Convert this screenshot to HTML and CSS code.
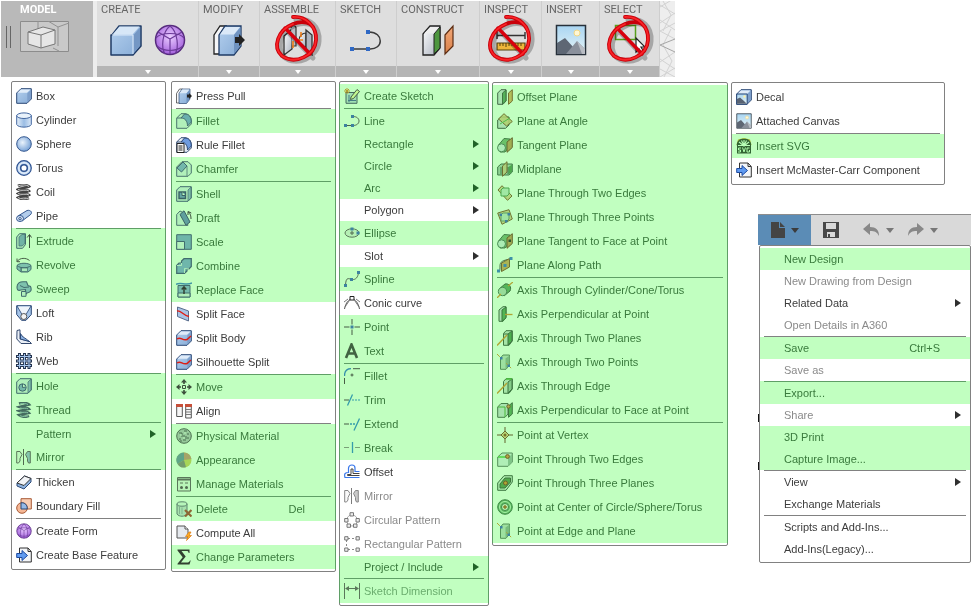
FILE: index.html
```html
<!DOCTYPE html>
<html lang="en">
<head>
<meta charset="utf-8">
<title>Modeling commands</title>
<link rel="stylesheet" href="styles.css">
</head>
<body>
<svg class="defs" aria-hidden="true">
<defs>
<linearGradient id="gb" x1="0" y1="0" x2="1" y2="1"><stop offset="0" stop-color="#b4d0ee"/><stop offset="1" stop-color="#86abd6"/></linearGradient>
<linearGradient id="gc" x1="0" y1="0" x2="1" y2="0"><stop offset="0" stop-color="#e6f0fa"/><stop offset=".5" stop-color="#9bbde4"/><stop offset="1" stop-color="#dbe8f7"/></linearGradient>
<radialGradient id="gs" cx=".4" cy=".4" r=".6"><stop offset="0" stop-color="#eaf3fc"/><stop offset="1" stop-color="#7ba5d8"/></radialGradient>
<radialGradient id="gp" cx=".5" cy=".4" r=".6"><stop offset="0" stop-color="#e9ccff"/><stop offset="1" stop-color="#a35fdc"/></radialGradient>
<linearGradient id="gw" x1="0" y1="0" x2="1" y2="1"><stop offset="0" stop-color="#fff"/><stop offset="1" stop-color="#a9b0bd"/></linearGradient>
<linearGradient id="sky" x1="0" y1="0" x2="0" y2="1"><stop offset="0" stop-color="#a9d5f2"/><stop offset="1" stop-color="#e6f4f6"/></linearGradient>
<linearGradient id="or" x1="0" y1="0" x2="0" y2="1"><stop offset="0" stop-color="#f3a878"/><stop offset="1" stop-color="#d9814a"/></linearGradient>
</defs>
<!-- large ribbon icons -->
<symbol id="L-box" viewBox="0 0 32 32"><path d="M2 11 9 2H31V22L23 31H1V11Z" fill="url(#gb)" stroke="#1f3b66" stroke-width="1.5" stroke-linejoin="round"/><path d="M2.500 10.500 9.500 2.500H29.500L22.500 10.500Z" fill="#d7e7f7"/><path d="M23.500 11 30 3.500V21.500L23.500 29.500Z" fill="#7497c4"/><path d="M2 11H23V30" fill="none" stroke="#dceafa"/></symbol>
<symbol id="L-form" viewBox="0 0 32 32"><circle cx="16" cy="16" r="14.500" fill="url(#gp)" stroke="#562b7d" stroke-width="1.500"/><path d="M16 2C8 8 7 24 11 30M16 2C24 8 25 24 21 30M2 14C6 8 26 8 30 14M3 22C10 28 22 28 29 22M16 15 16 30M16 15 4 8M16 15 28 8" fill="none" stroke="#6b3a98" stroke-width="1.200"/></symbol>
<symbol id="L-press" viewBox="0 0 32 32"><path d="M1 11 7 2H13L8 11V30H1Z" fill="#f5f6f8" stroke="#222" stroke-width="1.300"/><path d="M6 11 12 2H28V22L21 31H6Z" fill="url(#gb)" stroke="#1f3b66" stroke-width="1.300"/><path d="M7 10.500 12.500 3H27L21 10.500Z" fill="#dbe9f8"/><path d="M21 11 27.500 3V22L21 30Z" fill="#6f93c1"/><path d="M22 13H26V10L32 16 26 22V19H22Z" fill="#222"/></symbol>
<symbol id="L-joint" viewBox="0 0 32 32"><path d="M2 12 10 5V25L2 31Z" fill="url(#gw)" stroke="#333" stroke-width="1.300"/><path d="M9 4C9 1 14 1 14 4V22H10" fill="#b9bcc2" stroke="#333" stroke-width="1.200"/><path d="M17 17C17 11 21 9 24 9V23C20 23 17 22 17 17Z" fill="url(#gw)" stroke="#333" stroke-width="1.200"/><path d="M24 6 30 11V31L24 25Z" fill="#aeb4bf" stroke="#333" stroke-width="1.300"/><path d="M11 17V24M16 16H21M19 8V13" stroke="#ee7e1a" stroke-width="1.600"/></symbol>
<symbol id="L-sketch" viewBox="0 0 32 32"><path d="M2 25H19C34 26 34 8 19 8" fill="none" stroke="#3b3b3b" stroke-width="1.500"/><path d="M0 23h4v4H0ZM16 23h4v4h-4ZM16 6h4v4h-4Z" fill="#2f68c4"/></symbol>
<symbol id="L-construct" viewBox="0 0 32 32"><path d="M1 10 8 2H18V24L12 31H1Z" fill="url(#gw)" stroke="#222" stroke-width="1.300"/><path d="M12 10 18 3V24L12 30Z" fill="#4d963f" stroke="#222"/><path d="M2 9.500 8.500 3H17L11.500 9.500Z" fill="#eee"/><path d="M23 11 31 2V22L23 30Z" fill="url(#or)" stroke="#5b2c12" stroke-width="1.200"/></symbol>
<symbol id="L-measure" viewBox="0 0 32 32"><path d="M2 11.500H30M2 8V15M30 8V15" stroke="#333" stroke-width="1.400"/><path d="M2 19H30V26H2Z" fill="#eeb63b" stroke="#53400c" stroke-width="1.200"/><path d="M5 19V22M8 19V22M11 19V23M14 19V22M17 19V22M20 19V23M23 19V22M26 19V22" stroke="#53400c"/></symbol>
<symbol id="L-picture" viewBox="0 0 32 32"><path d="M1.500 1.500H30.500V30.500H1.500Z" fill="url(#sky)" stroke="#27303a" stroke-width="1.500"/><circle cx="22" cy="9" r="3" fill="#fff7d4" stroke="#f2d785"/><path d="M2 19 10 14 19 24 25 30H2Z" fill="#5e6774"/><path d="M11 30 22 17 30 25V30Z" fill="#8a909b"/><path d="M22 17 30 25V30H27Z" fill="#b8bcc3"/></symbol>
<symbol id="L-select" viewBox="0 0 32 32"><path d="M1.500 1.500H21.500V15.500H1.500Z" fill="none" stroke="#58a01c" stroke-width="1.500"/><path d="M22 14V28L25 25 28 30 30 28 27 23H31Z" fill="#fff" stroke="#222" stroke-width="1.200"/></symbol>
<symbol id="no" viewBox="0 0 56 56"><g fill="none" stroke-linecap="round" stroke-linejoin="round"><path d="M24 7C38 4 48 14 47 28C46 45 24 54 12 44C4 34 9 18 24 12C34 8 44 12 46 20M15 18 41 45" stroke="#000" stroke-opacity=".25" stroke-width="5"/><path d="M21 4C33 3 45 13 44 27C43 43 23 52 10 43C0 34 6 17 21 11C31 7 40 10 42 16" stroke="#c9000a" stroke-width="3.800"/><path d="M13 15 38 41" stroke="#d9000d" stroke-width="3.400"/><path d="M21 4C33 3 45 13 44 27C43 43 23 52 10 43C0 34 6 17 21 11" stroke="#fa2428" stroke-width="1.800"/></g></symbol>

<!-- create menu -->
<symbol id="box" viewBox="0 0 16 16"><path d="M.700 5 5 .700H15.300V11L11 15.300H.700Z" fill="url(#gb)" stroke="#2b4876"/><path d="M1.500 4.700 5 1.500H14.500L11 4.700Z" fill="#e0ecf9"/><path d="M11.300 5.300 14.800 2V10.700L11.300 14.500Z" fill="#7d9fcb"/></symbol>
<symbol id="cyl" viewBox="0 0 16 16"><path d="M.700 3.500V12.500C2 16 14 16 15.300 12.500V3.500Z" fill="url(#gc)" stroke="#4367a0"/><ellipse cx="8" cy="3.700" rx="7.300" ry="2.800" fill="#e9f2fb" stroke="#4367a0"/></symbol>
<symbol id="sph" viewBox="0 0 16 16"><circle cx="8" cy="8" r="7.300" fill="url(#gs)" stroke="#34578f"/></symbol>
<symbol id="tor" viewBox="0 0 16 16"><circle cx="8" cy="8" r="7.300" fill="#b7d0ee" stroke="#2f5391" stroke-width="1.200"/><circle cx="8" cy="8" r="5.300" fill="none" stroke="#e5effa" stroke-width="1.200"/><circle cx="8" cy="8" r="3.300" fill="#fff" stroke="#2f5391" stroke-width="1.500"/></symbol>
<symbol id="coil" viewBox="0 0 16 16"><g fill="none" stroke="#444" stroke-width="2.600"><path d="M2 2C5 .500 11 .500 13 2.500C10 4 5 4 2 5.500C5 7.500 11 5 13 7C10 9 5 7.500 2 9.500C5 11.500 11 9 13 11C10 13 5 11.500 2 13.500C5 15.500 10 15 13 14"/></g><g fill="none" stroke="#ddd" stroke-width=".900"><path d="M2 2C5 .500 11 .500 13 2.500M2 5.500C5 7.500 11 5 13 7M2 9.500C5 11.500 11 9 13 11M2 13.500C5 15.500 10 15 13 14"/></g></symbol>
<symbol id="pipe" viewBox="0 0 16 16"><path d="M2 8 11 2.500C15 1.500 17 5 14 7L6 13Z" fill="#b3cdec" stroke="#34578f"/><ellipse cx="4" cy="10.500" rx="3.500" ry="3" fill="#d5e4f6" stroke="#34578f"/><ellipse cx="4" cy="10.700" rx="1.300" ry="1.100" fill="#fff" stroke="#34578f"/></symbol>
<symbol id="extrude" viewBox="0 0 16 16"><path d="M.700 4 3.500 .700H9.500V11.500L6.500 15.300H.700Z" fill="#dbe7f5" stroke="#2b4876"/><path d="M3 4 6 1.500H9V10.500L6 13H3Z" fill="#79a0d2" stroke="#2b4876" stroke-width=".700"/><path d="M13.500 15V2M11.200 4.500 13.500 1.500 15.500 4.500" fill="none" stroke="#222"/></symbol>
<symbol id="revolve" viewBox="0 0 16 16"><path d="M1 4.500C4 .500 10 .500 13.500 3.500M1 1.500V4.700H4" fill="none" stroke="#333"/><path d="M1 8.500C3 5.500 13 5.500 15 8.500V12.500L12 15H5L1 12Z" fill="#8fb3e0" stroke="#2b4876"/><path d="M1 8.500C4 11.500 12 11.500 15 8.500M5 10.500V15" fill="none" stroke="#2b4876"/><path d="M5.500 11H11.500V14.500H5.500Z" fill="#dbe8f6" stroke="#2b4876" stroke-width=".700"/></symbol>
<symbol id="sweep" viewBox="0 0 16 16"><path d="M1 6C1 2 4 .700 7 .700H10.500L12 4.500 14.500 5.500C16 9 15 11 11 12L9.500 13.500V8.500L5 9C2 10 1 9 1 6Z" fill="#8fb3e0" stroke="#2b4876" stroke-width="1.100"/><path d="M4 4.500 8 6.500 13 6" fill="none" stroke="#2b4876"/><path d="M5.500 10.500H10V15.300H5.500Z" fill="#e5eefa" stroke="#2b4876"/></symbol>
<symbol id="loft" viewBox="0 0 16 16"><path d="M.700 .700H15.300V9.500L10 15.300H5.500L.700 9.500Z" fill="#a6c5e9" stroke="#2b4876"/><path d="M1.500 1.500H14.500L10 9H6Z" fill="#eef4fb"/><path d="M1 1 6 9.500M15 1 10 9.500" stroke="#2b4876" stroke-width=".800"/><circle cx="7.800" cy="11.500" r="3" fill="#f3f3f3" stroke="#555"/></symbol>
<symbol id="rib" viewBox="0 0 16 16"><path d="M1 1.500 4 .800V10L13 12 15.500 14.500 5 14.500 .800 10Z" fill="#e9eef5" stroke="#34496e"/><path d="M4.500 4.500C6 8.500 10 9 13 12.500L4.500 10Z" fill="#8db2e2" stroke="#2b4876"/></symbol>
<symbol id="web" viewBox="0 0 16 16"><path d="M3.500 0V16M8.500 0V16M13 0V16M0 3.500H16M0 8H16M0 12.500H16" stroke="#24344f" stroke-width="3"/><path d="M3.500 1V15M8.500 1V15M13 1V15M1 3.500H15M1 8H15M1 12.500H15" stroke="#a5c4ec" stroke-width="1.100"/></symbol>
<symbol id="hole" viewBox="0 0 16 16"><path d="M.700 4 4 .700H15.300V12L12 15.300H.700Z" fill="#e3ebf5" stroke="#2b4876"/><path d="M12 4 15 1.200V12L12 15Z" fill="#8fb0da" stroke="#2b4876" stroke-width=".700"/><circle cx="6.500" cy="9.500" r="3.700" fill="#7fa5d8" stroke="#2b4876"/><path d="M6.500 6V9.500L10 9" stroke="#2b4876" fill="#fff"/></symbol>
<symbol id="thread" viewBox="0 0 16 16"><path d="M3 1.500C6 .500 11 .500 13 2.500L3 5C6 6.500 11 4.500 13 7L3 9C6 10.500 11 8.500 13 11L3 13C6 15.500 11 15 13 14" fill="none" stroke="#30475f" stroke-width="2.500"/><path d="M4 2C7 1 10 1.500 12 2.500M4 6C7 7 10 5.500 12 6.800M4 10C7 11 10 9.500 12 10.800M4 13.700C7 15 10 14.500 12 13.800" fill="none" stroke="#a9c2dc" stroke-width=".900"/></symbol>
<symbol id="mirror" viewBox="0 0 16 16"><path d="M7.500 0V16" stroke="#444"/><path d="M.700 2.500H4L6 5.500 4 9.500V12L2.500 14H.700Z" fill="#f7f7f7" stroke="#555"/><path d="M14.300 2.500H11.500L9.500 5.500 11.500 9.500V12L12.500 14H14.300Z" fill="#9ab7df" stroke="#555"/></symbol>
<symbol id="thicken" viewBox="0 0 16 16"><path d="M1 9 8.500 2 15 4.500V8L8 15 1 12Z" fill="#8db2df" stroke="#2b4876"/><path d="M1 9 8.500 2 15 4.500 8 11.500Z" fill="#f2f4f7" stroke="#333"/></symbol>
<symbol id="boundary" viewBox="0 0 16 16"><path d="M5 .700H15.300V11H5Z" fill="#f9cdb3" stroke="#a85a35"/><circle cx="6" cy="10" r="5.300" fill="#f5b795" stroke="#a85a35"/><path d="M5 4.800C9 4.500 11.500 7 11.200 11H5Z" fill="#95b9e6" stroke="#2b4876"/></symbol>
<symbol id="insertfile" viewBox="0 0 16 16"><path d="M3.500 1H12L15.300 4.500V15H3.500Z" fill="#f3f5f8" stroke="#333"/><path d="M12 1V4.500H15" fill="none" stroke="#333"/><path d="M.700 6.500H6V3.500L11.500 8.500 6 13.500V10.500H.700Z" fill="#5f9af0" stroke="#1d4aa0"/></symbol>
<!-- modify menu -->
<symbol id="fillet" viewBox="0 0 16 16"><path d="M.700 5 5 .700H9C13 1 15.300 4 15.300 8V11L11 15.300H.700Z" fill="#e5ecf5" stroke="#3b5377"/><path d="M5 5 8.500 1C13 1 15.300 4 15.300 9L11.500 13C11.500 8 9 5 5 5Z" fill="#6e9be0" stroke="#2b4876"/><path d="M1 5H5" stroke="#3b5377"/></symbol>
<symbol id="rulefillet" viewBox="0 0 16 16"><use href="#fillet"/><path d="M1 6.500H8V15.500H1Z" fill="#fff" stroke="#222"/><path d="M2.500 9H6.500M2.500 11H6.500M2.500 13H6.500" stroke="#222"/></symbol>
<symbol id="chamfer" viewBox="0 0 16 16"><path d="M.700 6 6 .700H12L15.300 4V12L12 15.300H.700Z" fill="#e5ecf5" stroke="#3b5377"/><path d="M1 7 7 1 11 5 5.500 11Z" fill="#7ba5dd" stroke="#2b4876"/><path d="M11 5V15" stroke="#3b5377" stroke-width=".800"/></symbol>
<symbol id="shell" viewBox="0 0 16 16"><path d="M.700 4 4 .700H15.300V12L12 15.300H.700Z" fill="#e3ebf5" stroke="#2b4876"/><path d="M12 4 15 1.200V12L12 15Z" fill="#8fb0da" stroke="#2b4876" stroke-width=".700"/><path d="M3 6H9.500V12.500H3Z" fill="#6690d0" stroke="#1f3b66" stroke-width="1.400"/><path d="M6 6V9.500H9.500" fill="#fff" stroke="#1f3b66"/></symbol>
<symbol id="draft" viewBox="0 0 16 16"><path d="M.700 4.500 4 1 8 3 12 15.300H.700Z" fill="#e3ebf5" stroke="#3b5377"/><path d="M4 4.500 8 .800 14 12 10 15.300Z" fill="#5c87c6" stroke="#1f3b66"/><path d="M15 9C15 6 14.500 4 12.500 2M12 5 12 1.500 15.300 3" fill="none" stroke="#222"/></symbol>
<symbol id="scale" viewBox="0 0 16 16"><path d="M.700 .700H15.300V15.300H.700Z" fill="#75a3da" stroke="#2b4876"/><path d="M.700 7.500H8.500V15.300H.700Z" fill="#e9eff8" stroke="#2b4876"/></symbol>
<symbol id="combine" viewBox="0 0 16 16"><path d="M.700 7.500 3 5H5.500V3L8 .700H15.300V8.500L13 11H11V13L8.500 15.300H.700Z" fill="#77a4dc" stroke="#2b4876" stroke-width="1.200"/><path d="M5.500 7.500V5M1 7.500H5.500M8.500 15V10.500L13 11" fill="none" stroke="#dfe9f5"/></symbol>
<symbol id="replace" viewBox="0 0 16 16"><path d="M0 2.500C4 -.500 10 4 16 1" fill="none" stroke="#2879d2" stroke-width="1.500"/><path d="M2 3.500H14V15H2Z" fill="#82a9dc" stroke="#2b4876"/><path d="M2 11H14V15H2Z" fill="#e2eaf4" stroke="#2b4876"/><path d="M8 12V5M5.700 7.500 8 4.800 10.300 7.500" fill="none" stroke="#111" stroke-width="1.500"/></symbol>
<symbol id="splitface" viewBox="0 0 16 16"><path d="M1.500 1 12.500 5V15L1.500 10.500Z" fill="#a9c3e5" stroke="#596d8d"/><path d="M1 5C5 4 6 9 13 10.500" fill="none" stroke="#e01b12" stroke-width="1.300"/></symbol>
<symbol id="splitbody" viewBox="0 0 16 16"><use href="#box"/><path d="M1 9C5 6 6 11 11 9.500L15 6" fill="none" stroke="#dd1e14" stroke-width="1.500"/></symbol>
<symbol id="move" viewBox="0 0 16 16"><path d="M8 0 11 3.500H8.800V5H7.200V3.500H5ZM8 16 5 12.500H7.200V11H8.800V12.500H11ZM0 8 3.500 5V7.200H5V8.800H3.500V11ZM16 8 12.500 11V8.800H11V7.200H12.500V5Z" fill="#222"/><path d="M6.500 6.500H9.500V9.500H6.500Z" fill="#fff" stroke="#222"/></symbol>
<symbol id="align" viewBox="0 0 16 16"><path d="M.700 1.500H6.300V13.500H.700ZM9.700 1.500H15.300V15H9.700Z" fill="#f5f5f5" stroke="#555"/><path d="M0 1H7V4H0ZM9 1H16V4H9Z" fill="#c64f39"/><path d="M10 6.500H15M10 9H15M10 11.500H15" stroke="#777"/></symbol>
<symbol id="physical" viewBox="0 0 16 16"><circle cx="8" cy="8" r="7.300" fill="#b6bcc0" stroke="#3b4b42"/><path d="M3 5H6M8 3H11M5 8H9M11 6H13M3 11H5M7 12H10M11 10H13M6 5V7M10 8V11M5 12V14" stroke="#3b4b42"/><path d="M4 7H6M8 5H10M7 10H9" stroke="#f3f6f4"/></symbol>
<symbol id="appearance" viewBox="0 0 16 16"><circle cx="8" cy="8" r="7.500" fill="#d5cb51"/><path d="M8 8V.500A7.500 7.500 0 0 0 1.500 12Z" fill="#5b8fa0"/><path d="M8 8 1.500 12A7.500 7.500 0 0 0 10 15.200Z" fill="#7c8377"/><path d="M8 .500A7.500 7.500 0 0 1 15.500 7L8 8Z" fill="#d38f6b"/></symbol>
<symbol id="manage" viewBox="0 0 16 16"><path d="M1.500 1.500H14.500V15H1.500Z" fill="#f2f2f2" stroke="#555"/><path d="M1.500 3.500H14.500" stroke="#555" stroke-width="2"/><path d="M4 7H7M9 7H12" stroke="#555"/><circle cx="5.500" cy="11.500" r="1.500" fill="#444"/><circle cx="10.500" cy="11.500" r="1.500" fill="#444"/></symbol>
<symbol id="delete" viewBox="0 0 16 16"><path d="M1 3V13C3 16 9 16 11 13V3Z" fill="#d2dae0" stroke="#546572"/><ellipse cx="6" cy="3" rx="5" ry="2.200" fill="#eef3f5" stroke="#546572"/><path d="M3.500 6V13M6 6.500V13" stroke="#94a2ad"/><path d="M9 9 15.500 15.500M15.500 9 9 15.500" stroke="#a94216" stroke-width="2.200"/></symbol>
<symbol id="compute" viewBox="0 0 16 16"><path d="M1 1H9L12 4V13H1Z" fill="#e5e9ee" stroke="#555"/><path d="M9 1V4H12" fill="#fff" stroke="#555"/><path d="M13 7 9.500 11.500H12L10.500 15.500 15.500 10.500H13L15 7Z" fill="#ffae20" stroke="#d97913" stroke-width=".700"/></symbol>
<symbol id="sigma" viewBox="0 0 16 16"><path d="M1.500 .500H13.500V4H12.700C12.400 2.500 12 2 10.500 2H5.500L9.700 7.500 5 13.500H11C12.700 13.500 13.300 13 14 11.500H14.700L13.500 15.500H1.500V14.700L6.700 8.300 1.500 1.500Z" fill="#111"/></symbol>
<!-- sketch menu -->
<symbol id="newsketch" viewBox="0 0 16 16"><path d="M2 4.500H13V15.300H2Z" fill="#c9d8ea" stroke="#31445d"/><path d="M5 14V7M4 12.500H12" stroke="#325b9b"/><path d="M7 9 13 1.500 15.500 3.500 9.500 10.500 6.500 11.500Z" fill="#fff6b0" stroke="#333"/><path d="M3 0V6M0 3H6M1 1 5 5M5 1 1 5" stroke="#e78710"/></symbol>
<symbol id="line" viewBox="0 0 16 16"><path d="M1 12.500H9C17 12.500 17 3.500 9 3.500" fill="none" stroke="#3c3c3c"/><path d="M0 11h3v3H0ZM7 11h3v3H7ZM7 2h3v3H7Z" fill="#2463c8"/></symbol>
<symbol id="ellipse" viewBox="0 0 16 16"><ellipse cx="8" cy="8" rx="7" ry="4.200" fill="#ececec" stroke="#555"/><path d="M6 8H10M8 6V10" stroke="#444"/><path d="M6.500 2.500h3v3h-3ZM12.500 6.500h3v3h-3Z" fill="#2463c8"/></symbol>
<symbol id="spline" viewBox="0 0 16 16"><path d="M1.500 14C2 5 5 8 8 8.500C12 9 14 6 14.500 1.500" fill="none" stroke="#444"/><path d="M0 13h3v3H0ZM6 7h3v3H6ZM13 0h3v3h-3Z" fill="#2463c8"/></symbol>
<symbol id="conic" viewBox="0 0 16 16"><path d="M.500 14C3 1 13 1 15.500 14" fill="none" stroke="#555"/><path d="M1 12 7 3M15 12 9 3M0 7 4 4M16 7 12 4" stroke="#777"/><path d="M6 1.500H10V5H6Z" fill="#fff" stroke="#222"/></symbol>
<symbol id="point" viewBox="0 0 16 16"><path d="M8 0V5.500M8 10.500V16M0 8H5.500M10.500 8H16" stroke="#333"/><path d="M6.500 6.500h3v3h-3Z" fill="#2463c8"/></symbol>
<symbol id="text" viewBox="0 0 16 16"><path d="M2 15 7.500 1.500 13 15M4 10.500H11" fill="none" stroke="#2b3b2c" stroke-width="2.600"/></symbol>
<symbol id="sfillet" viewBox="0 0 16 16"><path d="M.500 8C.500 3 3 .700 7 .700" fill="none" stroke="#1673dc" stroke-width="1.300"/><path d="M9 .700H16M.500 10V16M6.500 7H9.500M8 5.500V8.500" stroke="#333"/></symbol>
<symbol id="trim" viewBox="0 0 16 16"><path d="M0 8H5" stroke="#333"/><path d="M3.500 13.500 8.500 2.500" stroke="#1683dc" stroke-width="1.300"/><path d="M8 8h2M11 8h2M14 8h2" stroke="#1683dc"/></symbol>
<symbol id="extend" viewBox="0 0 16 16"><path d="M0 8H5" stroke="#333"/><path d="M10 14.500 15.500 2.500M6 8h2M9 8h2" stroke="#1683dc" stroke-width="1.300"/></symbol>
<symbol id="break" viewBox="0 0 16 16"><path d="M0 7.500H5M11 7.500H16" stroke="#888"/><path d="M8.500 2V13" stroke="#1683dc" stroke-width="1.300"/></symbol>
<symbol id="offset" viewBox="0 0 16 16"><path d="M15.500 13.500H1C0 10 1 8.500 4.500 8.500V4C5 0 11 0 11 4V7.500H15.500" fill="none" stroke="#3977ea" stroke-width="1.200"/><path d="M15.500 11.500H3.500V10.500H7V5H9V9.500H15.500" fill="none" stroke="#444"/></symbol>
<symbol id="circpat" viewBox="0 0 16 16"><circle cx="8" cy="8.500" r="5.500" fill="none" stroke="#aaa"/><g fill="#eee" stroke="#777"><path d="M6 .700H9.500V4H6ZM.700 6.500H4V10H.700ZM12 6.500H15.300V10H12ZM3 12H6.500V15.300H3ZM9.500 12H13V15.300H9.500Z"/></g></symbol>
<symbol id="rectpat" viewBox="0 0 16 16"><path d="M4 2.500H12M2.500 4V12M4 13.500H12" stroke="#888" stroke-dasharray="2 2"/><g fill="#eee" stroke="#777"><path d="M.700 .700H4V4H.700ZM12 .700H15.300V4H12ZM.700 12H4V15.300H.700ZM12 12H15.300V15.300H12Z"/></g></symbol>
<symbol id="dim" viewBox="0 0 16 16"><path d="M.500 0V16M15.500 0V16M2 5.500H14" stroke="#555"/><path d="M1 5.500 5 3V8ZM15 5.500 11 3V8Z" fill="#555"/></symbol>
<!-- construct menu -->
<symbol id="c-offset" viewBox="0 0 16 16"><path d="M.700 4 4 .700H9V12L6 15.300H.700Z" fill="#d5dce3" stroke="#33443b"/><path d="M5.500 4 9 1V12L5.500 15Z" fill="#4c9c54" stroke="#26552b"/><path d="M11.500 4 15.300 .700V12L11.500 15.300Z" fill="#e9ae55" stroke="#805010"/></symbol>
<symbol id="c-angle" viewBox="0 0 16 16"><path d="M.700 7 4 4H12V12L8.500 15.300H.700Z" fill="#d5dce3" stroke="#24482e"/><path d="M1.500 6 7 .700 15.300 8.500 9.500 13Z" fill="#e3c477" fill-opacity=".85" stroke="#765313"/><path d="M3 11 13 5" stroke="#44ad3e"/></symbol>
<symbol id="c-tangent" viewBox="0 0 16 16"><path d="M2 7.500 7 1.500 13 2V9L8 15 3 15Z" fill="#6eb26d" stroke="#2c5f34"/><circle cx="4.500" cy="10.800" r="4" fill="#dbe7ec" stroke="#39704a"/><path d="M10 5 15.300 .700V10.500L10 15.300Z" fill="#cb984a" stroke="#64420d"/></symbol>
<symbol id="c-mid" viewBox="0 0 16 16"><path d="M.700 6 4 3H15.300V11L12 14H.700Z" fill="#adc9b7" stroke="#265c35"/><path d="M11.500 6 15 3.500V11L11.500 13.500Z" fill="#3d9140"/><path d="M4 6V13M11 6V13" stroke="#265c35"/><path d="M5.500 5 10 .700V11L5.500 15.300Z" fill="#e5c382" fill-opacity=".8" stroke="#704b11"/></symbol>
<symbol id="c-edges" viewBox="0 0 16 16"><path d="M1 5 5 .700 15 11 10.500 15.300Z" fill="#e3cd91" stroke="#765313"/><path d="M4 5 6 3H12V9L10 11H4Z" fill="#c9e3d1" stroke="#3d9140"/></symbol>
<symbol id="c-three" viewBox="0 0 16 16"><path d="M.700 4 12 .700 15.300 10 5 15.300Z" fill="#e3cd91" stroke="#765313"/><path d="M4 6 6 4H12V10L10 12H4Z" fill="#c9dfd1" stroke="#5d8861"/><path d="M2.500 4.500h2.500v2.500H2.500ZM10.500 4h2.500v2.500h-2.500ZM8 11h2.500v2.500H8Z" fill="#2463c8"/></symbol>
<symbol id="c-tanface" viewBox="0 0 16 16"><use href="#c-tangent"/><path d="M11.500 6.500h2.500v2.500h-2.500Z" fill="#0b280c"/></symbol>
<symbol id="c-path" viewBox="0 0 16 16"><path d="M1 14C3 15 3 13 3 9 3 5 5 3 15 2" fill="none" stroke="#324b32"/><path d="M4.500 6 12.500 1.500V10L4.500 14.500Z" fill="#d7a14c" stroke="#704b11"/><path d="M0 12.500h3v3H0ZM6.500 7h3v3h-3ZM12.500 0h3v3h-3Z" fill="#2475d8"/></symbol>
<symbol id="a-cyl" viewBox="0 0 16 16"><path d="M2 7 8 2C12 1 15 5 13 9L7 14Z" fill="#4ca453" stroke="#26552b"/><circle cx="5.500" cy="9.500" r="4.200" fill="#b8d4bf" stroke="#39704a"/><path d="M0 16 4 12M11 4 16 0" stroke="#e48e14" stroke-width="1.300"/></symbol>
<symbol id="a-perp" viewBox="0 0 16 16"><path d="M2 4 6 .700H9V11L6 15.300H2Z" fill="#d5dce3" stroke="#26552b"/><path d="M5 4 9 1V12L5 15.300Z" fill="#47a24c" stroke="#1d5723"/><path d="M8 8.500H15.500" stroke="#e48e14" stroke-width="1.300"/></symbol>
<symbol id="a-planes" viewBox="0 0 16 16"><path d="M6.500 3.500 9 .700H15.300V11L12 15.300H6.500Z" fill="#d2dfd6" stroke="#24552b"/><path d="M11 4 15 1V11L11 15Z" fill="#3b9a40" stroke="#24552b"/><path d="M6.500 4H11" stroke="#24552b"/><path d="M0 15.500 10 5" stroke="#e48e14" stroke-width="1.400"/></symbol>
<symbol id="a-points" viewBox="0 0 16 16"><path d="M3.500 4 6 1H12.500V11L9 15.300H3.500Z" fill="#c3dacb" stroke="#4a7851"/><path d="M8.500 4.500 12.500 1.500V11L8.500 15Z" fill="#86ad91"/><path d="M0 0 16 16" stroke="#e48e14" stroke-dasharray="4 9 7"/><path d="M3 3h2.500v2.500H3ZM10.500 10.500H13V13h-2.500Z" fill="#2463c8"/></symbol>
<symbol id="a-edge" viewBox="0 0 16 16"><path d="M6.500 3.500 9 .700H15.300V11L12 15.300H6.500Z" fill="#d2dfd6" stroke="#24552b"/><path d="M11 4 15 1V11L11 15Z" fill="#9cc0a3" stroke="#24552b"/><path d="M9 1H15" stroke="#35b61f" stroke-width="1.400"/><path d="M0 15.500 10 5" stroke="#e48e14" stroke-width="1.400"/></symbol>
<symbol id="a-face" viewBox="0 0 16 16"><path d="M.700 5 4 1.500H11V12L8 15.300H.700Z" fill="#d5dce3" stroke="#326039"/><path d="M11.500 4 15.300 .700V12L11.500 15.300Z" fill="#49a34e" stroke="#26552b"/><path d="M8 5V15M1 5H8" stroke="#35a61f"/><circle cx="11.500" cy="4.500" r="1.700" fill="#e79b42" stroke="#723c08"/></symbol>
<symbol id="p-vertex" viewBox="0 0 16 16"><path d="M8 0V5M8 11V16M0 8H5M11 8H16" stroke="#603b08"/><path d="M8 4 12 8 8 12 4 8Z" fill="#f1ce86" stroke="#704b11"/><circle cx="8" cy="8" r="1.500" fill="#895108"/></symbol>
<symbol id="p-edges" viewBox="0 0 16 16"><path d="M.700 6 5 2H15.300V11L11 15.300H.700Z" fill="#e3eaef" stroke="#4b7455"/><path d="M1 6H9" stroke="#2fc61b" stroke-width="1.400"/><path d="M11 7V15L15 11V3Z" fill="#92b7a2"/><circle cx="10.500" cy="5.500" r="1.900" fill="#e98e2a" stroke="#7b3c07"/></symbol>
<symbol id="p-three" viewBox="0 0 16 16"><path d="M.700 8 7 .700H15.300V7L9 15.300H.700Z" fill="#d9e7dc" stroke="#24552b"/><path d="M3 9 8 3H13.500V7L8 13H3Z" fill="#45943d" stroke="#205525"/><circle cx="8.500" cy="8" r="2" fill="#e48e14" stroke="#723c08"/></symbol>
<symbol id="p-center" viewBox="0 0 16 16"><circle cx="8" cy="8" r="7.300" fill="#51a95a" stroke="#276a34"/><circle cx="8" cy="8" r="5.500" fill="none" stroke="#d7edd8"/><circle cx="8" cy="8" r="3.500" fill="#f4faf4" stroke="#276a34"/><path d="M8 5.700 10.300 8 8 10.300 5.700 8Z" fill="#a3620e"/></symbol>
<!-- insert menu -->
<symbol id="canvas" viewBox="0 0 32 32"><use href="#L-picture"/></symbol>
<symbol id="decal" viewBox="0 0 16 16"><use href="#box"/><path d="M.700 5H11.200V15.300H.700Z" fill="url(#sky)" stroke="#2b4876"/><path d="M1 10 4 8.500 8 12 10.800 14.800H1Z" fill="#596373"/><circle cx="8.500" cy="7.500" r="1.200" fill="#fff0a6"/></symbol>
<symbol id="svgicon" viewBox="0 0 16 16"><path d="M2 1.500 8 0 14 1.500 15.500 7H.500Z" fill="#e0ad12"/><path d="M1 8C0 4 4 0 8 1C12 0 16 4 15 8V15.500H1Z" fill="#123d15"/><path d="M8 2V8M3 4 8 8 13 4M2 7.500H14M5.500 2.500 8 8 10.500 2.500" stroke="#f2fff0" stroke-width="1.100" fill="none"/><path d="M5 10H2.500V12H4.500V14H2M6.500 9.500 8 14 9.500 9.500M13.500 10H11V14H13.500V12" fill="none" stroke="#e2ffe0"/></symbol>
</svg>

<header class="ribbon">
  <button class="workspace"><span class="name">MODEL</span><span class="workspace-body"><span class="grip"></span>
    <svg class="workspace-icon" viewBox="0 0 49 31"><path d="M.500 .500H48.500V30.500H.500Z" fill="#c9c9c9" stroke="#8c8c8c"/><path d="M18 0V8M28 0 38 6 49 2M38 6V25M33 27 39 30" fill="none" stroke="#919191"/><path d="M8 11 23 6 35 9V23L21 27 8 23Z" fill="#e6e6e6" stroke="#777"/><path d="M8 11 21 14 35 9M21 14V27" fill="none" stroke="#777"/></svg></span></button>
  <button class="tool"><span class="name">CREATE</span><span class="art"><svg><use href="#L-box"/></svg><svg><use href="#L-form"/></svg></span><span class="drop"></span></button>
  <button class="tool"><span class="name">MODIFY</span><span class="art"><svg><use href="#L-press"/></svg></span><span class="drop"></span></button>
  <button class="tool"><span class="name">ASSEMBLE</span><span class="art"><svg><use href="#L-joint"/></svg><svg class="no"><use href="#no"/></svg></span><span class="drop"></span></button>
  <button class="tool"><span class="name">SKETCH</span><span class="art"><svg><use href="#L-sketch"/></svg></span><span class="drop"></span></button>
  <button class="tool"><span class="name">CONSTRUCT</span><span class="art"><svg><use href="#L-construct"/></svg></span><span class="drop"></span></button>
  <button class="tool"><span class="name">INSPECT</span><span class="art"><svg><use href="#L-measure"/></svg><svg class="no"><use href="#no"/></svg></span><span class="drop"></span></button>
  <button class="tool"><span class="name">INSERT</span><span class="art"><svg><use href="#L-picture"/></svg></span><span class="drop"></span></button>
  <button class="tool"><span class="name">SELECT</span><span class="art"><svg><use href="#L-select"/></svg><svg class="no"><use href="#no"/></svg></span><span class="drop"></span></button>
  <svg class="floor" viewBox="0 0 15 76" preserveAspectRatio="none"><path d="M0 0H15V76H0Z" fill="#eee"/><path d="M0 6 15 -3M0 4 15 13M0 22 15 12M0 19 15 29M0 61 15 51M0 58 15 68M0 30 15 22M0 30 15 38M0 68 15 76M0 76 15 67M3 0 11 14 3 30M11 28 3 44 12 60 4 76" fill="none" stroke="#d2d2d2"/><path d="M15 38 0 44 15 51" fill="none" stroke="#a5a5a5"/></svg>
</header>

<main class="menus">
<div class="menu create" role="menu">
  <button><svg><use href="#box"/></svg>Box</button>
  <button><svg><use href="#cyl"/></svg>Cylinder</button>
  <button><svg><use href="#sph"/></svg>Sphere</button>
  <button><svg><use href="#tor"/></svg>Torus</button>
  <button><svg><use href="#coil"/></svg>Coil</button>
  <button><svg><use href="#pipe"/></svg>Pipe</button>
  <div class="on"><hr>
  <button><svg><use href="#extrude"/></svg>Extrude</button>
  <button><svg><use href="#revolve"/></svg>Revolve</button>
  <button><svg><use href="#sweep"/></svg>Sweep</button></div>
  <button><svg><use href="#loft"/></svg>Loft</button>
  <button><svg><use href="#rib"/></svg>Rib</button>
  <button><svg><use href="#web"/></svg>Web</button>
  <div class="on"><hr>
  <button><svg><use href="#hole"/></svg>Hole</button>
  <button><svg><use href="#thread"/></svg>Thread</button>
  <hr>
  <button class="plain sub">Pattern</button>
  <button><svg><use href="#mirror"/></svg>Mirror</button>
  <hr></div>
  <button><svg><use href="#thicken"/></svg>Thicken</button>
  <button><svg><use href="#boundary"/></svg>Boundary Fill</button>
  <hr>
  <button><svg><use href="#L-form"/></svg>Create Form</button>
  <button><svg><use href="#insertfile"/></svg>Create Base Feature</button>
</div>

<div class="menu modify" role="menu">
  <button><svg><use href="#L-press"/></svg>Press Pull</button>
  <hr>
  <div class="on"><button><svg><use href="#fillet"/></svg>Fillet</button></div>
  <button><svg><use href="#rulefillet"/></svg>Rule Fillet</button>
  <div class="on">
  <button><svg><use href="#chamfer"/></svg>Chamfer</button>
  <hr>
  <button><svg><use href="#shell"/></svg>Shell</button>
  <button><svg><use href="#draft"/></svg>Draft</button>
  <button><svg><use href="#scale"/></svg>Scale</button>
  <button><svg><use href="#combine"/></svg>Combine</button>
  <button><svg><use href="#replace"/></svg>Replace Face</button></div>
  <button><svg><use href="#splitface"/></svg>Split Face</button>
  <button><svg><use href="#splitbody"/></svg>Split Body</button>
  <button><svg><use href="#splitbody"/></svg>Silhouette Split</button>
  <div class="on"><hr><button><svg><use href="#move"/></svg>Move</button></div>
  <button><svg><use href="#align"/></svg>Align</button>
  <hr>
  <div class="on">
  <button><svg><use href="#physical"/></svg>Physical Material</button>
  <button><svg><use href="#appearance"/></svg>Appearance</button>
  <button><svg><use href="#manage"/></svg>Manage Materials</button>
  <hr>
  <button><svg><use href="#delete"/></svg>Delete<kbd>Del</kbd></button></div>
  <button><svg><use href="#compute"/></svg>Compute All</button>
  <div class="on"><button><svg><use href="#sigma"/></svg>Change Parameters</button></div>
</div>

<div class="menu sketch" role="menu">
  <div class="on">
  <button><svg><use href="#newsketch"/></svg>Create Sketch</button>
  <hr>
  <button><svg><use href="#line"/></svg>Line</button>
  <button class="plain sub">Rectangle</button>
  <button class="plain sub">Circle</button>
  <button class="plain sub">Arc</button></div>
  <button class="plain sub">Polygon</button>
  <div class="on"><button><svg><use href="#ellipse"/></svg>Ellipse</button></div>
  <button class="plain sub">Slot</button>
  <div class="on"><button><svg><use href="#spline"/></svg>Spline</button></div>
  <button><svg><use href="#conic"/></svg>Conic curve</button>
  <div class="on">
  <button><svg><use href="#point"/></svg>Point</button>
  <button><svg><use href="#text"/></svg>Text</button>
  <hr>
  <button><svg><use href="#sfillet"/></svg>Fillet</button>
  <button><svg><use href="#trim"/></svg>Trim</button>
  <button><svg><use href="#extend"/></svg>Extend</button>
  <button><svg><use href="#break"/></svg>Break</button></div>
  <button><svg><use href="#offset"/></svg>Offset</button>
  <button disabled><svg class="gray"><use href="#mirror"/></svg>Mirror</button>
  <button disabled><svg><use href="#circpat"/></svg>Circular Pattern</button>
  <button disabled><svg><use href="#rectpat"/></svg>Rectangular Pattern</button>
  <div class="on">
  <button class="plain sub">Project / Include</button>
  <hr>
  <button disabled><svg><use href="#dim"/></svg>Sketch Dimension</button></div>
</div>

<div class="menu construct" role="menu">
  <div class="on">
  <button><svg><use href="#c-offset"/></svg>Offset Plane</button>
  <button><svg><use href="#c-angle"/></svg>Plane at Angle</button>
  <button><svg><use href="#c-tangent"/></svg>Tangent Plane</button>
  <button><svg><use href="#c-mid"/></svg>Midplane</button>
  <button><svg><use href="#c-edges"/></svg>Plane Through Two Edges</button>
  <button><svg><use href="#c-three"/></svg>Plane Through Three Points</button>
  <button><svg><use href="#c-tanface"/></svg>Plane Tangent to Face at Point</button>
  <button><svg><use href="#c-path"/></svg>Plane Along Path</button>
  <hr>
  <button><svg><use href="#a-cyl"/></svg>Axis Through Cylinder/Cone/Torus</button>
  <button><svg><use href="#a-perp"/></svg>Axis Perpendicular at Point</button>
  <button><svg><use href="#a-planes"/></svg>Axis Through Two Planes</button>
  <button><svg><use href="#a-points"/></svg>Axis Through Two Points</button>
  <button><svg><use href="#a-edge"/></svg>Axis Through Edge</button>
  <button><svg><use href="#a-face"/></svg>Axis Perpendicular to Face at Point</button>
  <hr>
  <button><svg><use href="#p-vertex"/></svg>Point at Vertex</button>
  <button><svg><use href="#p-edges"/></svg>Point Through Two Edges</button>
  <button><svg><use href="#p-three"/></svg>Point Through Three Planes</button>
  <button><svg><use href="#p-center"/></svg>Point at Center of Circle/Sphere/Torus</button>
  <button><svg><use href="#a-points"/></svg>Point at Edge and Plane</button></div>
</div>

<div class="side">
<div class="menu insert" role="menu">
  <button><svg><use href="#decal"/></svg>Decal</button>
  <button><svg><use href="#canvas"/></svg>Attached Canvas</button>
  <hr>
  <div class="on inner"><button><svg><use href="#svgicon"/></svg>Insert SVG</button></div>
  <button><svg><use href="#insertfile"/></svg>Insert McMaster-Carr Component</button>
</div>

<div class="file">
  <div class="quick">
    <button class="active" aria-label="File"><svg class="doc" viewBox="0 0 14 16"><path d="M0 0H8V6H14V16H0ZM9 0 14 5H9Z" fill="#444"/></svg><span class="caret"></span></button>
    <button class="save" aria-label="Save"><svg class="disk" viewBox="0 0 16 16"><path d="M0 0H16V16H0Z" fill="#484848"/><path d="M3 1H13V7H3Z" fill="#d9d9d9"/><path d="M4 10H12V15H4Z" fill="#d9d9d9"/><path d="M5 12H7V15H5Z" fill="#484848"/></svg></button>
    <button class="step" aria-label="Undo"><svg class="turn" viewBox="0 0 18 14"><path d="M0 6 7 0V4C13 4 16 7 16 13C14 9 12 8 7 8V12Z" fill="#888"/></svg><span class="caret"></span></button>
    <button class="step" aria-label="Redo"><svg class="turn" viewBox="0 0 18 14"><path d="M17 6 10 0V4C4 4 1 7 1 13C3 9 5 8 10 8V12Z" fill="#888"/></svg><span class="caret"></span></button>
  </div>
  <div class="menu" role="menu">
    <div class="on inner"><button class="plain">New Design</button></div>
    <button class="plain" disabled>New Drawing from Design</button>
    <button class="plain sub">Related Data</button>
    <button class="plain" disabled>Open Details in A360</button>
    <hr>
    <div class="on inner"><button class="plain">Save<kbd>Ctrl+S</kbd></button></div>
    <button class="plain" disabled>Save as</button>
    <div class="on inner"><hr><button class="plain">Export...</button></div>
    <button class="plain sub" disabled>Share</button>
    <div class="on inner"><button class="plain">3D Print</button>
    <button class="plain">Capture Image...</button></div>
    <hr>
    <button class="plain sub">View</button>
    <button class="plain">Exchange Materials</button>
    <hr>
    <button class="plain">Scripts and Add-Ins...</button>
    <button class="plain">Add-Ins(Legacy)...</button>
  </div>
</div>
</div>
</main>
</body>
</html>
```
FILE: styles.css
```css
* { box-sizing: border-box; }

body {
  margin: 0;
  padding: 1px 0 0 1px;
  background: #fff;
  font: 11px/14px "Liberation Sans", Arial, sans-serif;
  color: #3c3c3c;
}

button {
  margin: 0;
  padding: 0;
  border: 0;
  background: none;
  font: inherit;
  color: inherit;
  text-align: left;
  white-space: nowrap;
}

svg { display: block; flex: none; }
.defs { position: absolute; width: 0; height: 0; }

/* ribbon */
.ribbon {
  display: grid;
  grid-template-columns: 96px 102px 61px 76px 61px 83px 62px 58px 60px 15px;
  height: 76px;
}
.name {
  padding: 2px 0 0 4px;
  font: 11px/14px Roboto, "Liberation Sans", sans-serif;
  color: #666;
}
.workspace {
  display: flex;
  flex-direction: column;
  background: #b9b9b9;
  border-right: 4px solid #ededed;
}
.workspace .name { padding-left: 19px; font-weight: bold; color: #fff; }
.workspace-body { display: flex; align-items: center; gap: 9px; padding: 4px 0 0 5px; }
.workspace-icon { width: 49px; height: 31px; }
.grip { width: 5px; height: 22px; border: solid #666; border-width: 0 1px; }
.tool {
  display: flex;
  flex-direction: column;
  background: #dedede;
  border-right: 1px solid #cecece;
}
.art {
  position: relative;
  flex: 1;
  display: flex;
  justify-content: center;
  gap: 12px;
  padding-top: 7px;
}
.art svg { width: 32px; height: 32px; }
.art .no {
  position: absolute;
  left: 50%;
  top: -4px;
  width: 56px;
  height: 56px;
  margin-left: -26px;
}
.drop {
  display: flex;
  align-items: center;
  justify-content: center;
  height: 11px;
  background: #b5b5b5;
}
.drop::after { content: ""; border: solid transparent; border-width: 4px 3px 0; border-top-color: #fff; }
.floor { width: 100%; height: 76px; }

/* menus */
.menus { display: flex; align-items: flex-start; gap: 3px; padding: 4px 0 0 10px; }
.menu {
  padding: 2px 0;
  border: 1px solid #818181;
  border-radius: 2px;
  background: #fff;
}
.create { width: 155px; margin-right: 2px; }
.modify { width: 165px; }
.sketch { width: 150px; }
.construct { width: 236px; margin-top: 1px; }
.insert { width: 214px; }
.side { margin-top: 1px; }

.menu button {
  display: flex;
  align-items: center;
  gap: 4px;
  width: 100%;
  padding: 4px;
}
.menu button svg { width: 16px; height: 16px; }
.menu .plain { padding-left: 24px; }
.menu button:disabled { color: #8a8a8a; }
.menu hr { height: 1px; margin: 0 4px; border: 0; background: #818181; }

.sub::after {
  content: "";
  margin: 0 5px 0 auto;
  border: solid transparent;
  border-width: 4px 0 4px 6px;
  border-left-color: #2f2f2f;
}
kbd { margin: 0 26px 0 auto; font: inherit; }

/* highlighted commands */
.on {
  margin: 0 -1px;
  border: solid #5f9f66;
  border-width: 0 1px;
  background: #c1ffc0;
  color: #397a3c;
}
.on.inner { border-color: #818181; }
.on hr { background: #5f9f66; }
.on svg { opacity: .8; mix-blend-mode: multiply; }
.on button:disabled { color: #6bad6e; }
.on .sub::after { border-left-color: #206327; }
.gray { filter: grayscale(1); opacity: .7; }

/* file menu with quick-access bar */
.file {
  width: 213px;
  margin: 29px 0 0 27px;
  padding-left: 1px;
  background:
    linear-gradient(#111, #111) 0 200px / 1px 8px no-repeat,
    linear-gradient(#111, #111) 0 248px / 1px 8px no-repeat;
}
.quick {
  display: flex;
  height: 31px;
  margin-left: -1px;
  border-top: 1px solid #8d8d8d;
  background: #d9d9d9;
}
.quick button { display: flex; align-items: center; }
.quick .active { gap: 6px; padding: 0 13px; background: #5b8cb6; }
.quick .save { padding: 0 12px; }
.quick .step { gap: 5px; padding: 0 2px 0 12px; color: #777; }
.caret { border: solid transparent; border-width: 5px 4px 0; border-top-color: currentColor; margin-right: -1px; }
.doc { width: 14px; height: 16px; }
.disk { width: 16px; height: 16px; }
.turn { width: 18px; height: 14px; }
```
